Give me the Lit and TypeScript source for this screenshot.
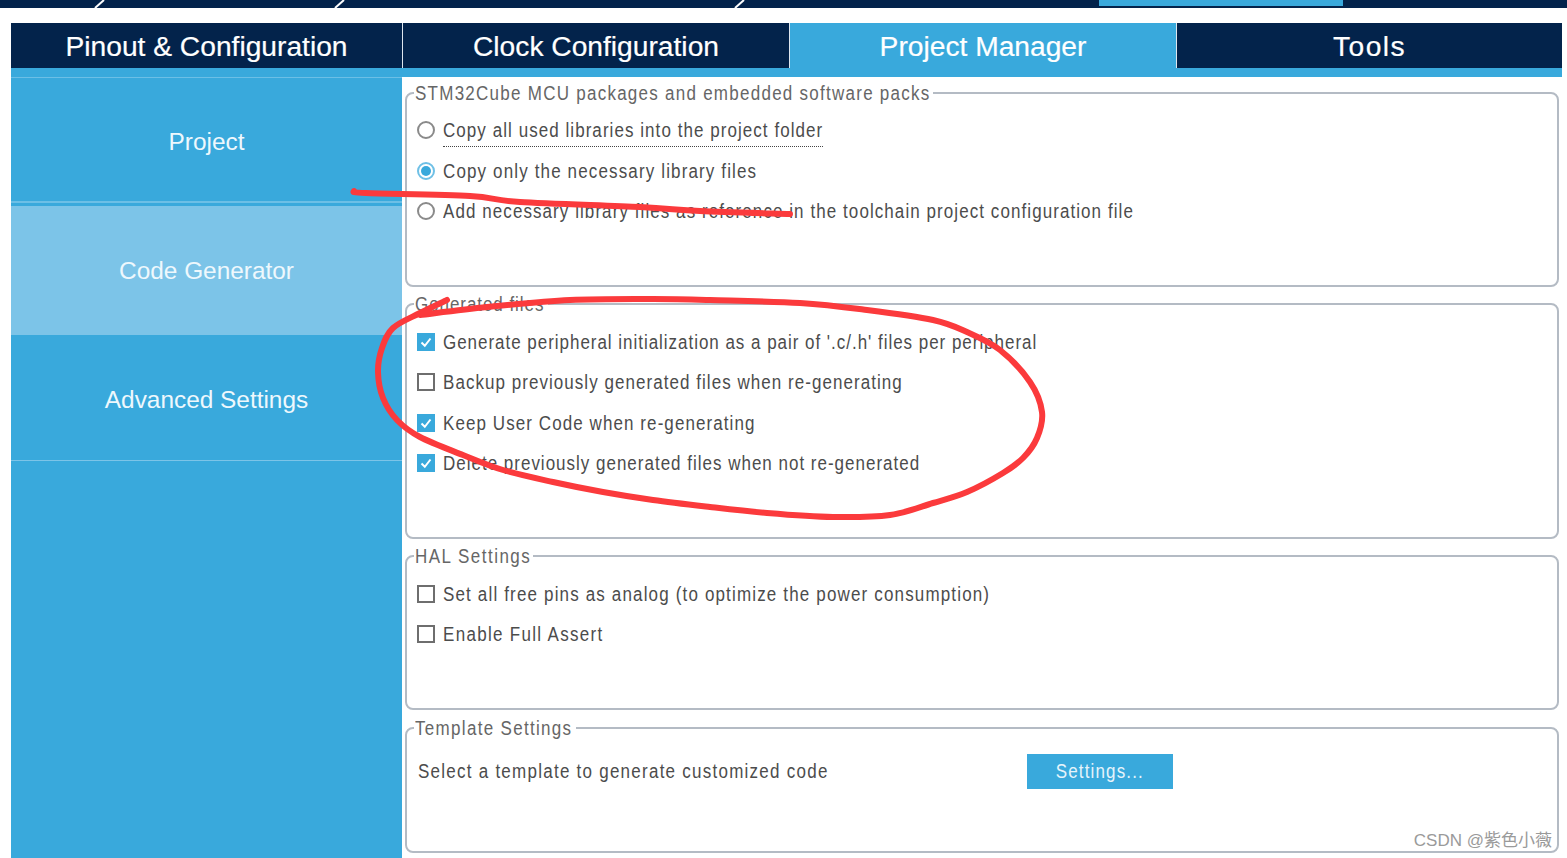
import { LitElement, html, css, svg } from "lit";
import { customElement } from "lit/decorators.js";

type Opt = { label: string; kind: "radio" | "check"; sp: number; on?: boolean; focus?: boolean };
type Section = { title: string; titleSp: number; legend: number; height: number; cls: string; opts: Opt[] };

const sections: Section[] = [
  {
    title: "STM32Cube MCU packages and embedded software packs",
    titleSp: 1.48,
    legend: 519,
    height: 204,
    cls: "",
    opts: [
      { label: "Copy all used libraries into the project folder", kind: "radio", sp: 1.24, focus: true },
      { label: "Copy only the necessary library files", kind: "radio", sp: 1.34, on: true },
      { label: "Add necessary library files as reference in the toolchain project configuration file", kind: "radio", sp: 1.26 },
    ],
  },
  {
    title: "Generated files",
    titleSp: 1.1,
    legend: 134,
    height: 245,
    cls: "nudge",
    opts: [
      { label: "Generate peripheral initialization as a pair of '.c/.h' files per peripheral", kind: "check", sp: 1.14, on: true },
      { label: "Backup previously generated files when re-generating", kind: "check", sp: 1.23 },
      { label: "Keep User Code when re-generating", kind: "check", sp: 1.27, on: true },
      { label: "Delete previously generated files when not re-generated", kind: "check", sp: 1.17, on: true },
    ],
  },
  {
    title: "HAL Settings",
    titleSp: 1.73,
    legend: 119,
    height: 164,
    cls: "nudge",
    opts: [
      { label: "Set all free pins as analog (to optimize the power consumption)", kind: "check", sp: 1.36 },
      { label: "Enable Full Assert", kind: "check", sp: 1.54 },
    ],
  },
];

/* Smooth freehand stroke through the sampled points (Catmull-Rom to Bezier). */
function smooth(p: number[][]): string {
  let d = `M${p[0][0]} ${p[0][1]}`;
  for (let i = 0; i < p.length - 1; i++) {
    const a = p[Math.max(0, i - 1)];
    const b = p[i];
    const c = p[i + 1];
    const e = p[Math.min(p.length - 1, i + 2)];
    const c1x = b[0] + (c[0] - a[0]) / 6;
    const c1y = b[1] + (c[1] - a[1]) / 6;
    const c2x = c[0] - (e[0] - b[0]) / 6;
    const c2y = c[1] - (e[1] - b[1]) / 6;
    d += ` C${c1x.toFixed(1)} ${c1y.toFixed(1)} ${c2x.toFixed(1)} ${c2y.toFixed(1)} ${c[0]} ${c[1]}`;
  }
  return d;
}

const strikeStroke = [[354, 191], [366, 193], [470, 196], [520, 202], [640, 207], [700, 211], [790, 214]];
const ovalTop = [[420, 315], [487, 307], [570, 300], [653, 299], [710, 300], [800, 303], [867, 310], [933, 320], [967, 332], [1000, 350], [1030, 382], [1042, 412], [1037, 438], [1023, 458], [1003, 473], [967, 492], [933, 503], [890, 515], [833, 517], [767, 513], [710, 507], [653, 500], [603, 492], [553, 482], [503, 470], [463, 455], [420, 437], [397, 420], [383, 398], [378, 372], [382, 348], [393, 328], [420, 313], [447, 300]];

@customElement("app-root")
export class AppRoot extends LitElement {
  static styles = css`
    :host {
      display: block;
      position: relative;
      width: 1567px;
      height: 858px;
      overflow: hidden;
      background: #fff;
      font-family: "Liberation Sans", Arial, sans-serif;
    }
    .topbar {
      height: 8px;
      background: #03234b;
      position: relative;
      display: flex;
    }
    .topbar .spacer { width: 1099px; }
    .topbar .active { width: 244px; height: 6px; background: #39a9dc; }
    .slash { position: absolute; left: 0; top: 0; }
    .main { padding: 15px 5px 0 11px; }
    .tabs {
      display: grid;
      grid-template-columns: 391px 387px 387px 386px;
      grid-template-rows: 45px;
      border-bottom: 9px solid #39a9dc;
    }
    .tab {
      background: #03234b;
      color: #fff;
      font-size: 28.2px;
      line-height: 47px;
      height: 45px;
      overflow: hidden;
      text-align: center;
      border-left: 1px solid #dfe6ee;
      box-sizing: border-box;
      -webkit-text-stroke: 0.2px #fff;
    }
    .tab:first-child { border-left: 0; }
    .tab.sel { background: #39a9dc; }
    .tab span { display: inline-block; }
    .tab.tools span { letter-spacing: 1.4px; }
    .body { display: flex; height: 781px; }
    .side {
      width: 391px;
      background: #39a9dc;
      display: flex;
      flex-direction: column;
      flex: none;
      color: #eef8fd;
      font-size: 24.4px;
      padding-top: 1px;
      border-top: 1px solid #6cbfe6;
      box-sizing: border-box;
    }
    .item {
      display: flex;
      align-items: center;
      justify-content: center;
      box-sizing: border-box;
    }
    .item.project { height: 124px; padding-top: 3px; border-bottom: 2px solid #6cbfe6; }
    .item.code { height: 129px; margin-top: 3px; background: #7cc4e8; }
    .item.adv { height: 125px; padding-top: 4px; border-bottom: 1px solid #7cc4e8; margin-top: 1px; }
    .content {
      flex: 1;
      padding: 6px 3px 0 3px;
      display: flex;
      flex-direction: column;
      gap: 7px;
      min-width: 0;
    }
    fieldset {
      margin: 0;
      padding: 0 0 0 10px;
      border: 2px solid #b4bbc4;
      border-radius: 8px;
      box-sizing: border-box;
      min-width: 0;
    }
    legend {
      padding: 0 0 0 1px;
      margin-left: -3px;
      box-sizing: border-box;
      font-size: 20px;
      line-height: 20px;
      color: #666;
      white-space: nowrap;
    }
    .txt {
      display: inline-block;
      transform-origin: left center;
      transform: scaleX(0.85);
      letter-spacing: 1.34px;
      white-space: nowrap;
    }
    .rows { padding-top: 7px; }
    .nudge .rows { padding-top: 7.4px; }
    .row {
      height: 40.6px;
      display: flex;
      align-items: center;
      gap: 8px;
      font-size: 20px;
      color: #4c4c4c;
    }
    .row .lbl { position: relative; display: block; height: 24px; line-height: 24px; white-space: nowrap; }
    .row .lbl.focus::after {
      content: "";
      position: absolute;
      left: 0;
      width: 380px;
      top: 28px;
      border-bottom: 1px dotted #444;
    }
    .radio {
      width: 18px;
      height: 18px;
      border: 2px solid #8a8a8a;
      border-radius: 50%;
      box-sizing: border-box;
      flex: none;
      display: flex;
      align-items: center;
      justify-content: center;
      background: #fff;
    }
    .radio.on { border-color: #6fc0e6; }
    .radio.on::before {
      content: "";
      width: 10px;
      height: 10px;
      border-radius: 50%;
      background: #39a9dc;
    }
    .check {
      width: 18px;
      height: 18px;
      border: 2px solid #6e6e6e;
      box-sizing: border-box;
      flex: none;
      background: #fff;
    }
    .check.on { border: 0; background: #39a9dc; }
    .check svg { display: block; }
    .tpl {
      display: flex;
      align-items: center;
      font-size: 20px;
      color: #4c4c4c;
      padding-top: 16px;
    }
    .tpl .left { width: 609px; height: 24px; line-height: 22px; }
    .tpl .left .txt { letter-spacing: 1.47px; }
    .btn {
      width: 146px;
      height: 35px;
      background: #39a9dc;
      color: #e6f4fb;
      font-size: 20px;
      display: flex;
      align-items: center;
      justify-content: center;
      border: 0;
      font-family: inherit;
      padding: 0;
    }
    .btn .txt { transform-origin: center; }
    .tpl-box { padding-left: 11px; margin-top: 1px; }
    .tpl-box legend { margin-left: -4px; }
    .tpl-box legend .txt { letter-spacing: 1.54px; }
    .ink { position: absolute; left: 0; top: 0; pointer-events: none; }
    .mark {
      position: absolute;
      right: 15px;
      bottom: 6px;
      font-size: 17px;
      line-height: 22px;
      color: #9a9a9a;
      font-family: "Liberation Sans", "Noto Sans CJK SC", sans-serif;
    }
  `;

  private control(o: Opt) {
    if (o.kind === "radio") return html`<span class="radio ${o.on ? "on" : ""}"></span>`;
    return html`<span class="check ${o.on ? "on" : ""}">
      ${o.on
        ? html`<svg width="18" height="18" viewBox="0 0 18 18"><path d="M4.5 9.5 L7.8 12.8 L13.5 5.5" fill="none" stroke="#fff" stroke-width="2"/></svg>`
        : ""}
    </span>`;
  }

  render() {
    return html`
      <div class="topbar">
        <div class="spacer"></div>
        <div class="active"></div>
        <svg class="slash" width="1000" height="8" viewBox="0 0 1000 8">
          ${[95, 335, 735].map(
            (x) => svg`<path d="M${x} 8 L${x + 9} 0" fill="none" stroke="#fff" stroke-width="2"/>`
          )}
        </svg>
      </div>
      <div class="main">
        <div class="tabs">
          <div class="tab"><span>Pinout &amp; Configuration</span></div>
          <div class="tab"><span>Clock Configuration</span></div>
          <div class="tab sel"><span>Project Manager</span></div>
          <div class="tab tools"><span>Tools</span></div>
        </div>
        <div class="body">
          <nav class="side">
            <div class="item project"><span>Project</span></div>
            <div class="item code"><span>Code Generator</span></div>
            <div class="item adv"><span>Advanced Settings</span></div>
          </nav>
          <div class="content">
            ${sections.map(
              (s) => html`<fieldset class=${s.cls} style="height:${s.height}px">
                <legend style="width:${s.legend}px"><span class="txt" style="letter-spacing:${s.titleSp}px">${s.title}</span></legend>
                <div class="rows">
                  ${s.opts.map(
                    (o) => html`<div class="row">
                      ${this.control(o)}
                      <span class="lbl ${o.focus ? "focus" : ""}"><span class="txt" style="letter-spacing:${o.sp}px">${o.label}</span></span>
                    </div>`
                  )}
                </div>
              </fieldset>`
            )}
            <fieldset class="tpl-box" style="height:135px">
              <legend style="width:162px"><span class="txt">Template Settings</span></legend>
              <div class="tpl">
                <span class="left"><span class="txt">Select a template to generate customized code</span></span>
                <button class="btn"><span class="txt">Settings...</span></button>
              </div>
            </fieldset>
          </div>
        </div>
      </div>
      <svg class="ink" width="1567" height="858" viewBox="0 0 1567 858">
        <g fill="none" stroke="#fb3a3c" stroke-width="6" stroke-linecap="round" stroke-linejoin="round">
          <path d=${smooth(strikeStroke)} />
          <path d=${smooth(ovalTop)} />
        </g>
      </svg>
      <div class="mark">CSDN @紫色小薇</div>
    `;
  }
}
